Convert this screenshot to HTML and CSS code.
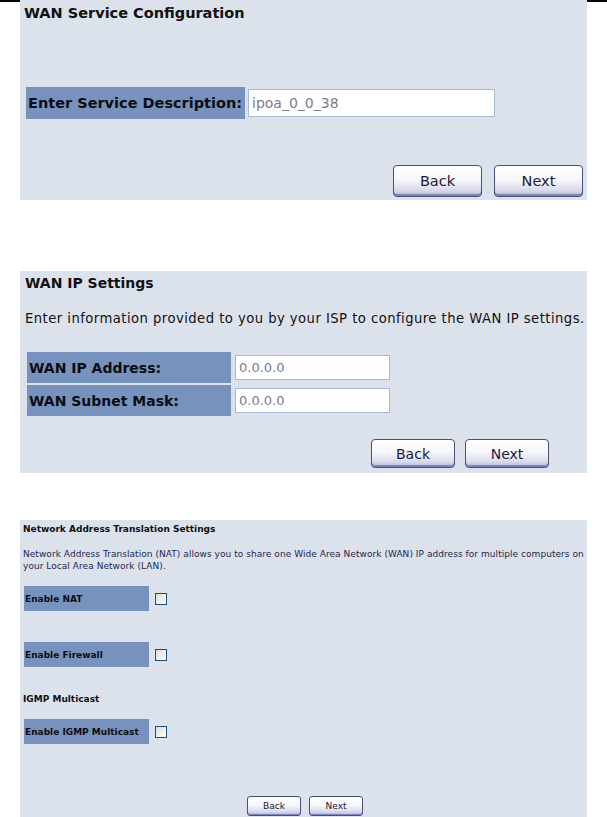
FILE: index.html
```html
<!DOCTYPE html>
<html lang="en">

<head>
    <meta charset="UTF-8">
    <meta name="viewport" content="width=device-width, initial-scale=1.0">
    <title>WAN Setup</title>
    <link rel="stylesheet" href="styles.css">
</head>

<body>
    <div class="page">
        <!-- step 1: service name -->
        <section class="panel panel-service">
            <h2 class="panel-title">WAN Service Configuration</h2>
            <div class="field-row">
                <label class="field-label" for="svc-desc">Enter Service Description:</label>
                <input class="field-input" id="svc-desc" type="text" value="ipoa_0_0_38">
            </div>
            <div class="actions">
                <button class="btn">Back</button>
                <button class="btn">Next</button>
            </div>
        </section>

        <!-- step 2: ip settings -->
        <section class="panel panel-ip">
            <h2 class="panel-title">WAN IP Settings</h2>
            <p class="panel-desc">Enter information provided to you by your ISP to configure the WAN IP settings.</p>
            <div class="field-list">
                <div class="field-row">
                    <label class="field-label" for="wan-ip">WAN IP Address:</label>
                    <input class="field-input" id="wan-ip" type="text" value="0.0.0.0">
                </div>
                <div class="field-row">
                    <label class="field-label" for="wan-mask">WAN Subnet Mask:</label>
                    <input class="field-input" id="wan-mask" type="text" value="0.0.0.0">
                </div>
            </div>
            <div class="actions">
                <button class="btn">Back</button>
                <button class="btn">Next</button>
            </div>
        </section>

        <!-- step 3: nat / firewall / igmp -->
        <section class="panel panel-nat">
            <h2 class="panel-title">Network Address Translation Settings</h2>
            <p class="panel-desc">Network Address Translation (NAT) allows you to share one Wide Area Network (WAN) IP address for multiple computers on your Local Area Network (LAN).</p>
            <div class="check-row row-nat">
                <label class="field-label" for="nat">Enable NAT</label>
                <input class="check" id="nat" type="checkbox">
            </div>
            <div class="check-row row-fw">
                <label class="field-label" for="fw">Enable Firewall</label>
                <input class="check" id="fw" type="checkbox">
            </div>
            <h3 class="sub-title">IGMP Multicast</h3>
            <div class="check-row row-igmp">
                <label class="field-label" for="igmp">Enable IGMP Multicast</label>
                <input class="check" id="igmp" type="checkbox">
            </div>
            <div class="actions">
                <button class="btn">Back</button>
                <button class="btn">Next</button>
            </div>
        </section>
    </div>
</body>

</html>
```

FILE: styles.css
```css
body {
    margin: 0;
    height: 817px;
    overflow: hidden;
    background: linear-gradient(#000, #000) top / 100% 2px no-repeat, #fff;
    font-family: "DejaVu Sans", Verdana, sans-serif;
    color: #111;
}

.page {
    padding: 0 20px;
}

.panel {
    background-color: #dce2ec;
    display: flex;
    flex-direction: column;
}

.panel-title,
.sub-title,
.panel-desc {
    margin: 0;
}

.field-row,
.check-row {
    display: flex;
    align-items: center;
}

.field-label {
    display: flex;
    align-items: center;
    background-color: #7793bd;
    font-weight: bold;
    color: #0c0c14;
}

.field-input {
    box-sizing: border-box;
    border: 1px solid #a7b9d5;
    background: #fff;
    color: #7c7c8c;
    font-family: "DejaVu Sans", Verdana, sans-serif;
    padding: 0 3px;
    outline: none;
}

.actions {
    display: flex;
    justify-content: flex-end;
}

.btn {
    box-sizing: border-box;
    border: 1px solid #4a4f78;
    border-radius: 4px;
    background: linear-gradient(#ffffff 0%, #f7f7fb 45%, #d9dbec 80%, #b3b6d8 100%);
    box-shadow: inset 0 -2px 0 #7f83b8;
    font-family: "DejaVu Sans", Verdana, sans-serif;
    color: #1c1838;
    padding: 0;
    cursor: pointer;
}

/* step 1 */
.panel-service {
    height: 200px;
    padding: 1px 4px 0 4px;
    box-sizing: border-box;
}

.panel-service .panel-title {
    font-size: 14.5px;
    line-height: 24px;
}

.panel-service .field-row {
    margin: 62px 0 0 2px;
}

.panel-service .field-label {
    width: 219px;
    height: 32px;
    padding-left: 2px;
    box-sizing: border-box;
    font-size: 14.5px;
}

.panel-service .field-input {
    margin-left: 3px;
    width: 247px;
    height: 28px;
    font-size: 14px;
}

.panel-service .actions {
    margin-top: 46px;
    gap: 12px;
}

.panel-service .btn {
    width: 89px;
    height: 32px;
    font-size: 14.5px;
}

/* step 2 */
.panel-ip {
    margin-top: 71px;
    height: 202px;
    padding: 0 38px 0 5px;
    box-sizing: border-box;
}

.panel-ip .panel-title {
    font-size: 14px;
    line-height: 24px;
}

.panel-ip .panel-desc {
    margin-top: 14px;
    font-size: 13.2px;
    letter-spacing: 0.45px;
    line-height: 20px;
    white-space: nowrap;
}

.panel-ip .field-list {
    margin: 23px 0 0 2px;
    display: flex;
    flex-direction: column;
    gap: 2px;
}

.panel-ip .field-label {
    width: 204px;
    height: 31px;
    padding-left: 2px;
    box-sizing: border-box;
    font-size: 14px;
}

.panel-ip .field-input {
    margin-left: 4px;
    width: 155px;
    height: 25px;
    font-size: 13px;
}

.panel-ip .actions {
    margin-top: 23px;
    gap: 10px;
}

.panel-ip .btn {
    width: 84px;
    height: 29px;
    font-size: 14px;
}

/* step 3 */
.panel-nat {
    margin-top: 47px;
    height: 300px;
    padding: 2px 0 0 3px;
    box-sizing: border-box;
    font-size: 9px;
}

.panel-nat .panel-title,
.panel-nat .sub-title {
    font-size: 9px;
    line-height: 14px;
}

.panel-nat .panel-desc {
    margin-top: 12px;
    line-height: 12px;
    letter-spacing: 0.05px;
    color: #26264e;
}

.panel-nat .check-row {
    margin-left: 1px;
}

.panel-nat .field-label {
    width: 125px;
    height: 25px;
    padding-left: 1px;
    box-sizing: border-box;
    font-size: 9px;
}

.row-nat {
    margin-top: 14px;
}

.row-fw {
    margin-top: 31px;
}

.panel-nat .sub-title {
    margin-top: 25px;
}

.row-igmp {
    margin-top: 13px;
}

.check {
    appearance: none;
    margin: 0 0 0 6px;
    width: 12px;
    height: 12px;
    box-sizing: border-box;
    border: 1px solid #1f4f7e;
    background: linear-gradient(135deg, #dcdcd6, #ffffff);
}

.panel-nat .actions {
    margin-top: 52px;
    justify-content: center;
    gap: 8px;
}

.panel-nat .btn {
    width: 54px;
    height: 20px;
    font-size: 9px;
    border-radius: 3px;
    box-shadow: inset 0 -1px 0 #7f83b8;
}
```
